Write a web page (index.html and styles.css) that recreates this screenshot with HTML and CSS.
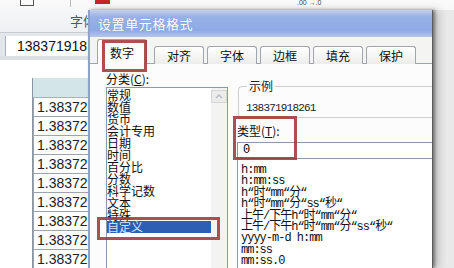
FILE: index.html
```html
<!DOCTYPE html>
<html>
<head>
  <title>设置单元格格式</title>
  <link rel="stylesheet" href="styles.css">
</head>
<body>
  <!-- Excel behind the dialog -->
  <div class="excel">
    <div class="ribbon">
      <div class="ribbon-top">
        <span class="rb-grid"></span>
        <span class="rb-sep"></span>
        <span class="rb-red"></span>
        <span class="rb-num">.00 →.0</span>
      </div>
      <div class="ribbon-label">字体</div>
    </div>
    <div class="formula">
      <div class="formula-input">138371918</div>
    </div>
    <div class="sheet">
      <div class="gutter"></div>
      <div class="col">
        <div class="col-head"></div>
        <div class="cell">1.38372</div>
        <div class="cell">1.38372</div>
        <div class="cell">1.38372</div>
        <div class="cell">1.38372</div>
        <div class="cell">1.38372</div>
        <div class="cell">1.38372</div>
        <div class="cell">1.38372</div>
        <div class="cell">1.38372</div>
        <div class="cell">1.38372</div>
      </div>
    </div>
  </div>

  <!-- Format cells dialog -->
  <div class="dialog">
    <div class="title">设置单元格格式</div>
    <div class="tabs">
      <div class="tab active">数字</div>
      <div class="tab">对齐</div>
      <div class="tab">字体</div>
      <div class="tab">边框</div>
      <div class="tab">填充</div>
      <div class="tab">保护</div>
    </div>
    <div class="panel">
      <div class="left">
        <div class="label">分类(<u>C</u>):</div>
        <div class="catbox">
          <div class="cats">
            <div>常规</div>
            <div>数值</div>
            <div>货币</div>
            <div>会计专用</div>
            <div>日期</div>
            <div>时间</div>
            <div>百分比</div>
            <div>分数</div>
            <div>科学记数</div>
            <div>文本</div>
            <div>特殊</div>
            <div class="sel">自定义</div>
          </div>
          <div class="scroll">
            <div class="scroll-up">
              <svg width="14" height="11" viewBox="0 0 14 11"><path d="M4 7 L7 4 L10 7" fill="none" stroke="#b9bcc4" stroke-width="1.5"/></svg>
            </div>
          </div>
        </div>
      </div>
      <div class="right">
        <fieldset class="sample">
          <legend>示例</legend>
          <div class="sample-value">138371918261</div>
        </fieldset>
        <div class="label type-label">类型(<u>T</u>):</div>
        <div class="type-input">0</div>
        <div class="formats">
          <div>h:mm</div>
          <div>h:mm:ss</div>
          <div>h“时“mm“分“</div>
          <div>h“时“mm“分“ss“秒“</div>
          <div>上午/下午h“时“mm“分“</div>
          <div>上午/下午h“时“mm“分“ss“秒“</div>
          <div>yyyy-m-d h:mm</div>
          <div>mm:ss</div>
          <div>mm:ss.0</div>
        </div>
      </div>
    </div>
  </div>

  <!-- red highlight marks -->
  <div class="mark mark-tab"></div>
  <div class="mark mark-type"></div>
  <div class="mark mark-cat"></div>
</body>
</html>
```

FILE: styles.css
```css
body {
  margin: 0;
  width: 454px;
  height: 268px;
  overflow: hidden;
  position: relative;
  background: #fff;
  font-family: "Noto Sans CJK SC", sans-serif;
}

/* Excel window */
.excel {
  height: 268px;
  overflow: hidden;
}

.ribbon {
  height: 33px;
  background: linear-gradient(#fafafa, #eef0f3);
  border-bottom: 1px solid #c9cdd3;
  box-sizing: border-box;
}

.ribbon-top {
  display: flex;
  align-items: flex-start;
  height: 8px;
}

.rb-grid {
  width: 12px;
  height: 5px;
  margin-left: 20px;
  border: 1px solid #555;
  border-top: none;
}

.rb-sep {
  width: 1px;
  height: 7px;
  margin-left: 36px;
  background: #bbb;
}

.rb-red {
  width: 15px;
  height: 4px;
  margin-left: 24px;
  background: #c8252a;
}

.rb-num {
  margin-left: 187px;
  font: 7px/5px "Liberation Sans", sans-serif;
  color: #445;
}

.ribbon-label {
  margin: 5px 0 0 70px;
  font-size: 13px;
  line-height: 15px;
  color: #4d5a6c;
}

.formula {
  height: 23px;
  padding: 3px 0 0 5px;
  background: #e3e7ec;
  box-sizing: border-box;
}

.formula-input {
  height: 20px;
  padding-left: 11px;
  background: #fff;
  border-left: 1px solid #a8b0bb;
  font: 14px/20px "Liberation Sans", sans-serif;
  color: #111;
}

.sheet {
  display: flex;
  border-top: 4px solid #dde1e6;
}

.gutter {
  width: 33px;
  height: 200px;
  border-right: 1px solid #8c96a2;
  margin-top: 18px;
  box-sizing: border-box;
}

.col {
  width: 60px;
  margin-top: 18px;
}

.col-head {
  height: 19px;
  background: #d4e5ea;
  border-bottom: 1px solid #a4b1bb;
}

.cell {
  height: 19px;
  padding-left: 3px;
  border: 1px solid #9ba5ae;
  border-top: none;
  box-sizing: border-box;
  font: 14px/18px "Liberation Sans", sans-serif;
  color: #222;
}

/* dialog */
.dialog {
  position: absolute;
  left: 88px;
  top: 10px;
  width: 345px;
  height: 258px;
  background: #f4f4f2;
  border-left: 2px solid #8ea2cc;
  border-right: 1px solid #5c5c5c;
  box-sizing: border-box;
  box-shadow: 2px 0 3px rgba(0, 0, 0, 0.4), 6px 0 8px rgba(0, 0, 0, 0.18), 22px 0 0 #e9e9e9;
  overflow: hidden;
}

.title {
  height: 27px;
  padding-left: 8px;
  background: linear-gradient(#c4d1ef, #98b1e7 25%, #8ea9e5 75%, #b7c7ec);
  color: #fff;
  font-size: 13px;
  line-height: 27px;
  letter-spacing: 0.6px;
  text-shadow: 0 0 1px #7d95cf;
}

.tabs {
  display: flex;
  align-items: flex-end;
  gap: 3px;
  height: 27px;
  padding-left: 7px;
  margin-bottom: -1px;
  position: relative;
}

.tab {
  width: 50px;
  height: 18px;
  border: 1px solid #9ea5ad;
  border-bottom: none;
  border-radius: 3px 3px 0 0;
  background: linear-gradient(#ffffff, #ececea);
  box-sizing: border-box;
  font-size: 12px;
  line-height: 17px;
  text-align: center;
  color: #111;
}

.tab.active {
  height: 25px;
  margin-right: 4px;
  background: #fdfdfd;
  line-height: 26px;
}

.panel {
  display: flex;
  gap: 9px;
  height: 205px;
  padding: 9px 0 0 16px;
  background: #fcfcfc;
  border-top: 1px solid #9ea5ad;
  box-sizing: border-box;
}

.label {
  font-size: 12px;
  line-height: 12px;
  color: #111;
}

.left {
  width: 122px;
}

.catbox {
  display: flex;
  margin-top: 2px;
  height: 190px;
  background: #fff;
  border: 1px solid #8a9aac;
}

.cats {
  flex: 1;
  padding-top: 1px;
  font-size: 12px;
  line-height: 12px;
  color: #111;
}

.cats .sel {
  background: #2d5eb3;
  color: #cfe0ff;
}

.scroll {
  width: 16px;
  background: #f3f3f1;
}

.scroll-up {
  height: 13px;
  margin-top: 2px;
  background: #ececea;
  border: 1px solid #d6d6d4;
  box-sizing: border-box;
}

.scroll-up svg {
  display: block;
}

.right {
  flex: 1;
}

.sample {
  margin: 7px 0 0 1px;
  padding: 0 0 0 7px;
  height: 38px;
  box-sizing: border-box;
  border: 1px solid #cfd0cc;
  border-right: none;
  border-radius: 4px 0 0 4px;
}

.sample legend {
  padding: 0 2px;
  margin-left: 1px;
  font-size: 12px;
  line-height: 12px;
  color: #222;
}

.sample-value {
  font: 11px/12px "Liberation Mono", monospace;
  letter-spacing: -0.8px;
  color: #222;
  margin-top: 10px;
}

.type-label {
  margin-top: 7px;
}

.type-input {
  height: 17px;
  margin-top: 5px;
  padding-left: 5px;
  background: #fff;
  border: 1px solid #8a9aac;
  border-right: none;
  box-sizing: border-box;
  font: 12px/15px "Liberation Mono", monospace;
}

.formats {
  height: 120px;
  margin-top: 1px;
  padding: 5px 0 0 3px;
  background: #fff;
  border-left: 1px solid #8a9aac;
  font-family: "Liberation Mono", "Noto Sans CJK SC", monospace;
  font-size: 12px;
  line-height: 11.4px;
  letter-spacing: -1px;
  color: #111;
}

/* red highlight boxes */
.mark {
  position: absolute;
  border: 3px solid rgba(158, 48, 48, 0.85);
  box-sizing: border-box;
}

.mark-tab {
  left: 102px;
  top: 40px;
  width: 45px;
  height: 32px;
}

.mark-type {
  left: 233px;
  top: 116px;
  width: 64px;
  height: 44px;
}

.mark-cat {
  left: 97px;
  top: 217px;
  width: 123px;
  height: 23px;
}
```
